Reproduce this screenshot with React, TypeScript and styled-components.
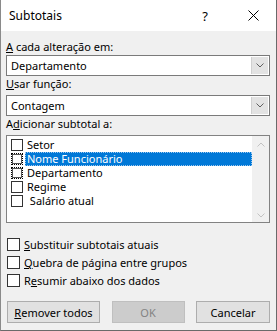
import styled, { createGlobalStyle, css } from "styled-components";

const GlobalStyle = createGlobalStyle`
  html, body {
    margin: 0;
    padding: 0;
    background: #f0f0f0;
  }
  body {
    font-family: "Noto Sans", "Liberation Sans", sans-serif;
    font-size: 11px;
    color: #000;
  }
`;

const Dialog = styled.div`
  width: 277px;
  height: 331px;
  box-sizing: border-box;
  background: #f0f0f0;
  border-left: 1px solid #8a8a8a;
  border-right: 1px solid #6a6a6a;
  border-bottom: 1px solid #6a6a6a;
  display: flex;
  flex-direction: column;
  overflow: hidden;
`;

const TitleBar = styled.div`
  height: 31px;
  flex: 0 0 31px;
  background: #fff;
  display: flex;
  align-items: center;
  padding-left: 8px;
  font-size: 12px;
`;

const Title = styled.span`
  flex: 1 1 auto;
`;

const HelpButton = styled.span`
  width: 12px;
  margin-right: 37px;
  font-size: 13px;
  text-align: center;
`;

const CloseButton = styled.span`
  display: flex;
  margin-right: 17px;
`;

const Body = styled.div`
  display: flex;
  flex-direction: column;
  padding: 0 6px 0 5px;
`;

const Label = styled.div<{ $mt?: number }>`
  line-height: 15px;
  height: 15px;
  margin-top: ${(p) => p.$mt ?? 0}px;
  white-space: nowrap;
`;

const U = styled.span`
  text-decoration: underline;
  text-underline-offset: 1px;
`;

const Combo = styled.div<{ $mt?: number }>`
  height: 21px;
  box-sizing: border-box;
  margin-top: ${(p) => p.$mt ?? 0}px;
  background: #fff;
  border: 1px solid #7a7a7a;
  display: flex;
  align-items: stretch;
`;

const ComboText = styled.div`
  flex: 1 1 auto;
  padding-left: 4px;
  display: flex;
  align-items: center;
`;

const ComboArrow = styled.div`
  width: 16px;
  background: #e3e3e3;
  border-left: 1px solid #d0d0d0;
  margin: 1px 1px 1px 0;
  display: flex;
  align-items: center;
  justify-content: center;
`;

const ListBox = styled.div`
  margin-top: 4px;
  height: 88px;
  box-sizing: border-box;
  background: #fff;
  border: 1px solid #828282;
  display: flex;
`;

const ListItems = styled.div`
  flex: 1 1 auto;
  padding: 2px 0 0 4px;
  display: flex;
  flex-direction: column;
`;

const ListRow = styled.div`
  height: 14px;
  display: flex;
  align-items: center;
`;

const ListCheck = styled.span<{ $dotted?: boolean }>`
  width: 12px;
  height: 12px;
  box-sizing: border-box;
  flex: 0 0 12px;
  background: #fff;
  border: 1px solid #333;
  ${(p) =>
    p.$dotted &&
    css`
      border: 1px dotted #000;
      outline: 1px solid #555;
      outline-offset: -2px;
    `}
`;

const ListText = styled.span<{ $selected?: boolean }>`
  margin-left: 2px;
  padding-left: 2px;
  height: 14px;
  line-height: 14px;
  box-sizing: border-box;
  white-space: pre;
  ${(p) =>
    p.$selected &&
    css`
      flex: 1 1 auto;
      background: #0078d7;
      color: #fff;
      outline: 1px dotted #9ec8ee;
      outline-offset: -1px;
    `}
`;

const ScrollBar = styled.div`
  width: 17px;
  flex: 0 0 17px;
  background: #f0f0f0;
  display: flex;
  flex-direction: column;
  justify-content: space-between;
  align-items: center;
  padding: 6px 0 4px;
  box-sizing: border-box;
`;

const Options = styled.div`
  margin-top: 15px;
  display: flex;
  flex-direction: column;
  gap: 5px;
  padding-left: 1px;
`;

const OptionRow = styled.label`
  display: flex;
  align-items: center;
  height: 13px;
  gap: 4px;
  white-space: nowrap;
`;

const Box = styled.span`
  width: 13px;
  height: 13px;
  box-sizing: border-box;
  background: #fff;
  border: 1px solid #333;
`;

const Buttons = styled.div`
  margin-top: 14px;
  display: flex;
  justify-content: space-between;
  padding-left: 1px;
`;

const Button = styled.div<{ $w: number; $disabled?: boolean }>`
  width: ${(p) => p.$w}px;
  height: 22px;
  box-sizing: border-box;
  background: ${(p) => (p.$disabled ? "#cccccc" : "#e1e1e1")};
  border: 1px solid ${(p) => (p.$disabled ? "#bfbfbf" : "#adadad")};
  color: ${(p) => (p.$disabled ? "#838383" : "#000")};
  display: flex;
  align-items: center;
  justify-content: center;
  white-space: nowrap;
`;

const Chevron = ({ up, color }: { up?: boolean; color: string }) => (
  <svg width="8" height="5" viewBox="0 0 8 5">
    <path
      d={up ? "M0.5 4.5 L4 1 L7.5 4.5" : "M0.5 0.5 L4 4 L7.5 0.5"}
      fill="none"
      stroke={color}
      strokeWidth="1"
    />
  </svg>
);

const CloseIcon = () => (
  <svg width="11" height="11" viewBox="0 0 11 11">
    <path d="M0.5 0.5 L10.5 10.5 M10.5 0.5 L0.5 10.5" stroke="#000" strokeWidth="1" />
  </svg>
);

const fields = [
  { name: "Setor" },
  { name: "Nome Funcionário", selected: true, dotted: true },
  { name: "Departamento", dotted: true },
  { name: "Regime" },
  { name: " Salário atual" },
];

function App() {
  return (
    <>
      <GlobalStyle />
      <Dialog>
        <TitleBar>
          <Title>Subtotais</Title>
          <HelpButton>?</HelpButton>
          <CloseButton>
            <CloseIcon />
          </CloseButton>
        </TitleBar>
        <Body>
          <Label $mt={8}>
            <U>A</U> cada alteração em:
          </Label>
          <Combo $mt={1}>
            <ComboText>Departamento</ComboText>
            <ComboArrow>
              <Chevron color="#606060" />
            </ComboArrow>
          </Combo>
          <Label>
            <U>U</U>sar função:
          </Label>
          <Combo $mt={4}>
            <ComboText>Contagem</ComboText>
            <ComboArrow>
              <Chevron color="#606060" />
            </ComboArrow>
          </Combo>
          <Label>
            A<U>d</U>icionar subtotal a:
          </Label>
          <ListBox>
            <ListItems>
              {fields.map((f) => (
                <ListRow key={f.name}>
                  <ListCheck $dotted={f.dotted} />
                  <ListText $selected={f.selected}>{f.name}</ListText>
                </ListRow>
              ))}
            </ListItems>
            <ScrollBar>
              <Chevron up color="#c2c2c2" />
              <Chevron color="#c2c2c2" />
            </ScrollBar>
          </ListBox>
          <Options>
            <OptionRow>
              <Box />
              <span>
                <U>S</U>ubstituir subtotais atuais
              </span>
            </OptionRow>
            <OptionRow>
              <Box />
              <span>
                <U>Q</U>uebra de página entre grupos
              </span>
            </OptionRow>
            <OptionRow>
              <Box />
              <span>
                R<U>e</U>sumir abaixo dos dados
              </span>
            </OptionRow>
          </Options>
          <Buttons>
            <Button $w={93}>
              <span>
                <U>R</U>emover todos
              </span>
            </Button>
            <Button $w={73} $disabled>
              OK
            </Button>
            <Button $w={74}>Cancelar</Button>
          </Buttons>
        </Body>
      </Dialog>
    </>
  );
}

export default App;
